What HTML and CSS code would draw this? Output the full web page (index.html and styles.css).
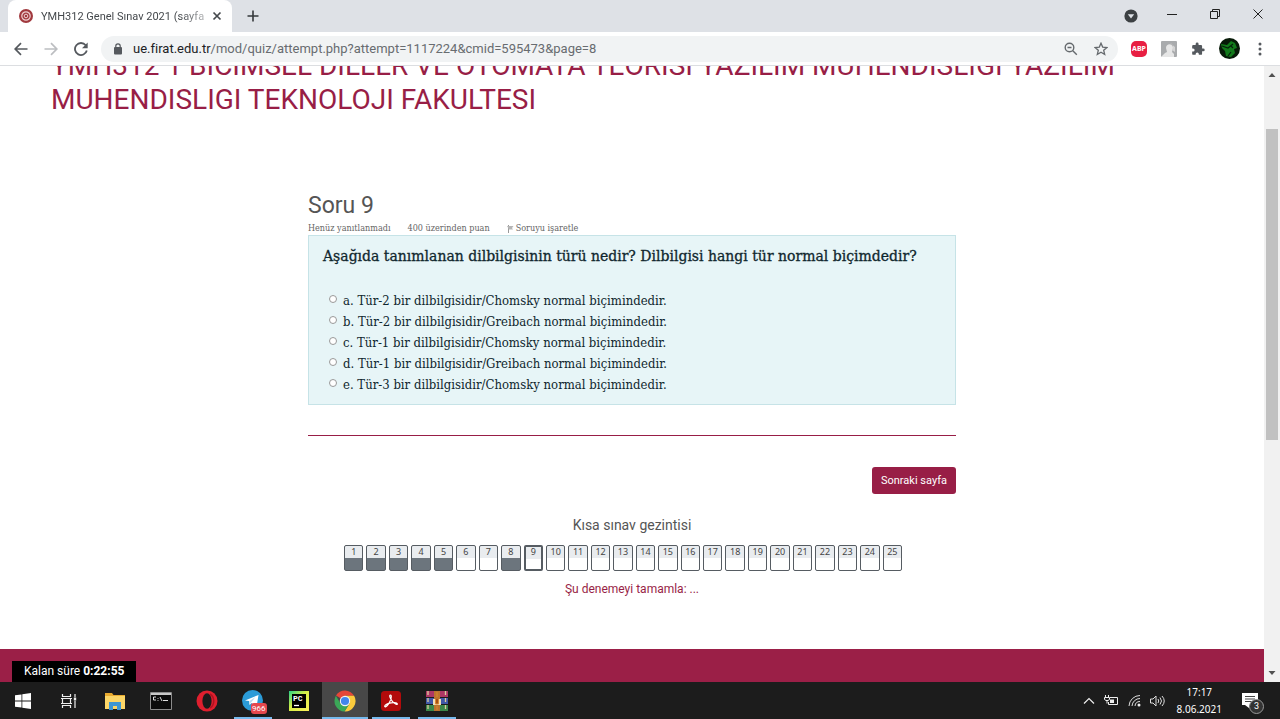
FILE: index.html
```html
<!DOCTYPE html>
<html lang="tr">
<head>
<meta charset="utf-8">
<title>YMH312 Genel Sınav 2021</title>
<link rel="stylesheet" href="styles.css">
</head>
<body>
<header class="browser">
  <div class="tabs">
    <div class="tab">
      <svg class="favicon" width="14" height="14" viewBox="0 0 14 14"><circle cx="7" cy="7" r="7" fill="#a1393e"/><circle cx="7" cy="7" r="4.2" fill="none" stroke="#efd0d0" stroke-width="1.2"/><circle cx="7" cy="7" r="1.800" fill="none" stroke="#efd0d0"/></svg>
      <span class="tab-title">YMH312 Genel Sınav 2021 (sayfa</span>
      <button class="icon" aria-label="Sekmeyi kapat"><svg width="10" height="10" viewBox="0 0 10 10"><path d="M1.500 1.500l7 7m0-7l-7 7" stroke="#45494d" stroke-width="1.700"/></svg></button>
    </div>
    <button class="icon new-tab" aria-label="Yeni sekme"><svg width="12" height="12" viewBox="0 0 12 12"><path d="M6 .5v11M.5 6h11" stroke="#35383b" stroke-width="1.600"/></svg></button>
    <div class="window-buttons">
      <button class="icon search-tabs" aria-label="Sekme ara"><svg width="14" height="14" viewBox="0 0 14 14"><circle cx="7" cy="7" r="6.600" fill="#3c4043"/><path d="M3.800 5.200h6.400L7 9.600z" fill="#dee1e6"/></svg></button>
      <button class="icon" aria-label="Küçült"><svg width="10" height="10" viewBox="0 0 10 10"><path d="M0 5.500h10" stroke="#222"/></svg></button>
      <button class="icon" aria-label="Geri yükle"><svg width="10" height="10" viewBox="0 0 10 10" fill="none" stroke="#222"><path d="M.5 2.500h7v7h-7zM2.500 2.500v-2h7v7h-2"/></svg></button>
      <button class="icon" aria-label="Kapat"><svg width="10" height="10" viewBox="0 0 10 10"><path d="M.5.5l9 9m0-9l-9 9" stroke="#222"/></svg></button>
    </div>
  </div>
  <div class="toolbar">
    <div class="nav-buttons">
      <button class="icon" aria-label="Geri"><svg width="14" height="14" viewBox="0 0 14 14" fill="none" stroke="#55595e" stroke-width="1.700"><path d="M13.500 7H1.500M7 1.200L1.200 7 7 12.800"/></svg></button>
      <button class="icon" aria-label="İleri"><svg width="14" height="14" viewBox="0 0 14 14" fill="none" stroke="#bcbec1" stroke-width="1.700"><path d="M.5 7h12M7 1.200L12.800 7 7 12.800"/></svg></button>
      <button class="icon" aria-label="Yenile"><svg width="14" height="14" viewBox="0 0 14 14"><path d="M11.700 3.300A6 6 0 1 0 12.800 8.500" fill="none" stroke="#55595e" stroke-width="1.800"/><path d="M13.700.5v5.700H8z" fill="#55595e"/></svg></button>
    </div>
    <div class="omnibox">
      <svg width="10" height="12" viewBox="0 0 10 12"><rect x="1" y="4" width="8" height="7.500" rx="1" fill="#55595e"/><path d="M2.800 4.500V3a2.200 2.200 0 0 1 4.400 0v1.500" fill="none" stroke="#55595e" stroke-width="1.200"/></svg>
      <span class="url"><b class="host">ue.firat.edu.tr</b>/mod/quiz/attempt.php?attempt=1117224&amp;cmid=595473&amp;page=8</span>
      <button class="icon" aria-label="Yakınlaştırma"><svg width="14" height="14" viewBox="0 0 14 14" fill="none" stroke="#65696d" stroke-width="1.400"><circle cx="5.500" cy="5.500" r="4.300"/><path d="M8.800 8.800l4 4M3.500 5.500h4"/></svg></button>
      <button class="icon" aria-label="Yer işareti"><svg width="14" height="14" viewBox="0 0 14 14" fill="none" stroke="#65696d" stroke-width="1.300"><path d="M7 1.200l1.700 3.900 4.200.4-3.200 2.800 1 4.200L7 10.300l-3.700 2.200 1-4.200L1.100 5.500l4.200-.4z"/></svg></button>
    </div>
    <div class="extensions">
      <button class="icon abp">ABP</button>
      <button class="icon" aria-label="Eklenti"><svg width="16" height="16" viewBox="0 0 16 16"><rect width="16" height="16" rx="1" fill="#a9abad"/><path d="M0 16l4-4 2-1-1-4c0-5 7-5 7 0l-1 4 2 2v3z" fill="#e6e6e6"/><path d="M9 2c3 1 4 4 2 7l3 2V6z" fill="#d4d4d4"/></svg></button>
      <button class="icon" aria-label="Uzantılar"><svg width="14" height="14" viewBox="0 0 24 24"><path d="M21 11h-2V7a2 2 0 0 0-2-2h-4V3.500a2.500 2.500 0 0 0-5 0V5H4a2 2 0 0 0-2 2v4h1.500a2.700 2.700 0 0 1 0 5.400H2V20a2 2 0 0 0 2 2h4v-1.500a2.700 2.700 0 0 1 5.400 0V22H17a2 2 0 0 0 2-2v-4h2a2.500 2.500 0 0 0 0-5z" fill="#55595e"/></svg></button>
      <button class="icon" aria-label="Profil"><svg width="21" height="21" viewBox="0 0 21 21"><circle cx="10.500" cy="10.500" r="10.500" fill="#071a08"/><path d="M2 6l6 1 4-4 4 2 2 5-3 1 1 4-4 4-5-1-1-5-3-3z" fill="#127a1b"/><path d="M3 8l6 2 5-4M9 18l3-4M12 8l2 2" fill="none" stroke="#06220a" stroke-width="1.200"/></svg></button>
      <button class="icon menu" aria-label="Menü"><svg width="4" height="14" viewBox="0 0 4 14" fill="#55595e"><circle cx="2" cy="2" r="1.500"/><circle cx="2" cy="7" r="1.500"/><circle cx="2" cy="12" r="1.500"/></svg></button>
    </div>
  </div>
</header>

<div class="viewport">
  <main class="page">
    <h1 class="course">YMH312 1 BICIMSEL DILLER VE OTOMATA TEORISI YAZILIM MUHENDISLIGI YAZILIM MUHENDISLIGI TEKNOLOJI FAKULTESI</h1>
    <div class="quiz">
      <h2 class="number">Soru 9</h2>
      <div class="meta">
        <span>Henüz yanıtlanmadı</span>
        <span>400 üzerinden puan</span>
        <a class="flag" href="#"><svg width="7" height="8" viewBox="0 0 7 8"><path d="M1.500 0v8" stroke="#999"/><path d="M0 1h6.500L5 3l1 1.500H2z" fill="#b5b5b5"/></svg>Soruyu işaretle</a>
      </div>
      <form class="question">
        <p class="prompt">Aşağıda tanımlanan dilbilgisinin türü nedir? Dilbilgisi hangi tür normal biçimdedir?</p>
        <div class="answers">
          <label><input type="radio" name="answer"><span>a. Tür-2 bir dilbilgisidir/Chomsky normal biçimindedir.</span></label>
          <label><input type="radio" name="answer"><span>b. Tür-2 bir dilbilgisidir/Greibach normal biçimindedir.</span></label>
          <label><input type="radio" name="answer"><span>c. Tür-1 bir dilbilgisidir/Chomsky normal biçimindedir.</span></label>
          <label><input type="radio" name="answer"><span>d. Tür-1 bir dilbilgisidir/Greibach normal biçimindedir.</span></label>
          <label><input type="radio" name="answer"><span>e. Tür-3 bir dilbilgisidir/Chomsky normal biçimindedir.</span></label>
        </div>
      </form>
      <hr class="rule">
      <div class="actions"><button class="next">Sonraki sayfa</button></div>
      <section class="navigation">
        <h3 class="nav-title">Kısa sınav gezintisi</h3>
        <div class="nav-grid">
          <a class="q done" href="#">1</a><a class="q done" href="#">2</a><a class="q done" href="#">3</a><a class="q done" href="#">4</a><a class="q done" href="#">5</a><a class="q" href="#">6</a><a class="q" href="#">7</a><a class="q done" href="#">8</a><a class="q current" href="#">9</a><a class="q" href="#">10</a><a class="q" href="#">11</a><a class="q" href="#">12</a><a class="q" href="#">13</a><a class="q" href="#">14</a><a class="q" href="#">15</a><a class="q" href="#">16</a><a class="q" href="#">17</a><a class="q" href="#">18</a><a class="q" href="#">19</a><a class="q" href="#">20</a><a class="q" href="#">21</a><a class="q" href="#">22</a><a class="q" href="#">23</a><a class="q" href="#">24</a><a class="q" href="#">25</a>
        </div>
        <a class="finish" href="#">Şu denemeyi tamamla: ...</a>
      </section>
    </div>
    <footer class="footer"></footer>
    <div class="timer">Kalan süre <b>0:22:55</b></div>
  </main>
  <div class="scrollbar">
    <svg width="16" height="17" viewBox="0 0 16 17"><path d="M4.500 11h7L8 7z" fill="#505050"/></svg>
    <div class="track"><div class="thumb"></div></div>
    <svg width="16" height="17" viewBox="0 0 16 17"><path d="M4.500 6h7L8 10z" fill="#505050"/></svg>
  </div>
</div>

<nav class="taskbar">
  <div class="apps">
    <button class="app" aria-label="Başlat"><svg width="16" height="16" viewBox="0 0 16 16" fill="#fff"><path d="M0 2.300l6.500-.9v6.100H0zM7.300 1.300L16 0v7.500H7.300zM0 8.400h6.500v6.100L0 13.700zM7.300 8.400H16V16l-8.700-1.300z"/></svg></button>
    <button class="app" aria-label="Görev görünümü"><svg width="16" height="14" viewBox="0 0 16 14" fill="none" stroke="#eee" stroke-width="1.200"><path d="M1.500 0v2.500h8V0M1.500 14v-2.500h8V14M0 4.500h11M0 9.500h11M1.500 4.500v5M9.500 4.500v5M14 0v3M14 7v7"/><path d="M12.800 3.500h2.400v3h-2.400z" fill="#eee" stroke="none"/></svg></button>
    <button class="app" aria-label="Dosya Gezgini"><svg width="20" height="18" viewBox="0 0 20 18"><path d="M0 1h7l1.500 2H20v14H0z" fill="#e9aa2f"/><path d="M0 4h20v13H0z" fill="#fcd667"/><path d="M4 10h12v8h-4v-4H8v4H4z" fill="#3d96d3"/></svg></button>
    <button class="app" aria-label="Komut İstemi"><svg width="22" height="18" viewBox="0 0 22 18"><path d="M.5.5h21v17H.5z" fill="#0b0b0b" stroke="#8b8b8b"/><path d="M1 1h20v2H1z" fill="#c8c8c8"/><path d="M6 5H3.500v3H6M8 6v.8M8 8v.8M10 5l2 4M13 8.500h5" fill="none" stroke="#ddd"/></svg></button>
    <button class="app" aria-label="Opera"><svg width="22" height="22" viewBox="0 0 22 22"><circle cx="11" cy="11" r="10.500" fill="#df1f2e"/><ellipse cx="11" cy="11" rx="4.600" ry="7.800" fill="#1b1b1b"/><path d="M14 4c5 3 5 11 0 14" fill="none" stroke="#af1220" stroke-width="1.500"/></svg></button>
    <button class="app open" aria-label="Telegram"><svg width="22" height="22" viewBox="0 0 22 22"><circle cx="10.500" cy="10.500" r="10.500" fill="#2b9bd7"/><path d="M3 10.500L16.500 5l-2 12-5-4-2 2-.5-4z" fill="#fff"/><path d="M7.500 11l6-4-4 5-2 2z" fill="#b8dcf0"/></svg><span class="badge">966</span></button>
    <button class="app" aria-label="PyCharm"><svg width="20" height="20" viewBox="0 0 20 20"><defs><linearGradient id="pc" x2="1" y2="1"><stop stop-color="#27cf88"/><stop offset=".45" stop-color="#d7ee45"/><stop offset="1" stop-color="#fbf05a"/></linearGradient></defs><path d="M0 0h20v20H0z" fill="url(#pc)"/><path d="M3 3h14v14H3z" fill="#000"/><text class="pc" x="4" y="10">PC</text><path d="M5 14.500h5" stroke="#fff" stroke-width="1.300"/></svg></button>
    <button class="app open active" aria-label="Chrome"><svg width="22" height="22" viewBox="0 0 22 22"><path d="M11 11L2 5.500A10.500 10.500 0 0 1 20.100 5.800H11z" fill="#e64638"/><path d="M11 5.800h9.100A10.500 10.500 0 0 1 10.500 21.500L15.500 13.500z" fill="#fbcb3c"/><path d="M1.900 5.700A10.500 10.500 0 0 0 10.500 21.500l5-8L11 11 6.500 13.500z" fill="#3ba757"/><circle cx="11" cy="11" r="5.200" fill="#f4f4f4"/><circle cx="11" cy="11" r="4.100" fill="#4285ec"/></svg></button>
    <button class="app open" aria-label="Acrobat"><svg width="20" height="20" viewBox="0 0 20 20"><rect width="20" height="20" rx="3.500" fill="#b30b0b"/><path d="M9.500 4c-1.500 0-.7 3 1.500 5.800 2 2.500 5 4.500 5.300 3.200.3-1.500-5-1.800-8.600-.6-2.600.9-4.500 2.500-3.900 3.200.9 1 3.900-2 5.500-6 1.200-3 1.300-5.600.2-5.600z" fill="none" stroke="#fff" stroke-width="1.200"/></svg></button>
    <button class="app open" aria-label="WinRAR"><svg width="22" height="20" viewBox="0 0 22 20"><path d="M0 0h22v6H0z" fill="#ad3765"/><path d="M0 7h22v6H0z" fill="#4058a8"/><path d="M0 14h22v6H0z" fill="#3b874a"/><path d="M2 0v20M19.500 0v20" stroke="#dacb9c" stroke-width="1.300" stroke-dasharray="4 3"/><path d="M8 0h6v20H8z" fill="#bc732e"/><path d="M7 8h8v6H7z" fill="#f2dfba"/><path d="M9.500 8v5h3V8M11 1v5M11 15v4" fill="#a55017" stroke="#d98a2e"/></svg></button>
  </div>
  <div class="tray">
    <button class="icon" aria-label="Gizli simgeler"><svg width="12" height="8" viewBox="0 0 12 8"><path d="M1 6.500l5-5 5 5" fill="none" stroke="#eee" stroke-width="1.200"/></svg></button>
    <svg width="15" height="12" viewBox="0 0 15 12" fill="none" stroke="#eee"><path d="M6 2.500h7.500v7h-9V7M1.500 0v2M4.500 0v2M.5 2.500h5v2l-1.500 1H2l-1.500-1zM3 6v2.500"/><path d="M6 4.500h4v3.500H6z" fill="#eee" stroke="none"/></svg>
    <svg width="13" height="13" viewBox="0 0 13 13" fill="none" stroke="#ddd"><path d="M1 12A11 11 0 0 1 12 1.500M4 12a8 8 0 0 1 8-7.500M7 12a5 5 0 0 1 5-4.500"/><circle cx="11" cy="11" r="1.500" fill="#eee" stroke="none"/></svg>
    <svg width="15" height="12" viewBox="0 0 15 12" fill="none" stroke="#ddd"><path d="M.5 4v4H3l3 3V1L3 4zM8 4q1.500 2 0 4M10 2.500q3 3.500 0 7M12 1q4.500 5 0 10"/></svg>
    <div class="clock"><time>17:17</time><time>8.06.2021</time></div>
    <button class="icon notice" aria-label="Bildirimler"><svg width="16" height="16" viewBox="0 0 16 16"><path d="M0 0h16v12h-9v3l-4-3H0z" fill="#fff"/><path d="M3 3.500h10M3 6h10M3 8.500h7" stroke="#444"/></svg><span class="count">3</span></button>
  </div>
</nav>
</body>
</html>
```
FILE: styles.css
```css
* { box-sizing: border-box; }
body { margin: 0; height: 100vh; display: flex; flex-direction: column; overflow: hidden; background: #fff; font-family: Roboto, "Liberation Sans", sans-serif; }
button { font: inherit; color: inherit; border: 0; background: none; padding: 0; }
a { text-decoration: none; color: inherit; }
svg { display: block; flex: none; }
h1, h2, h3, p { margin: 0; font-weight: 400; }
.icon { display: flex; align-items: center; justify-content: center; flex: none; }

.browser { flex: none; border-bottom: 1px solid #dcdee1; font-family: "Noto Sans", sans-serif; }
.tabs { display: flex; align-items: center; height: 32px; background: #dee1e6; padding-left: 8px; }
.tab { display: flex; align-items: center; gap: 8px; width: 224px; height: 32px; padding: 0 10px 0 11px; background: #fff; border-radius: 8px 8px 0 0; }
.tab-title { flex: 1; min-width: 0; white-space: nowrap; font: 11px Roboto, sans-serif; color: #45494d; -webkit-mask-image: linear-gradient(90deg, #000 85%, #0006); mask-image: linear-gradient(90deg, #000 85%, #0006); }
.new-tab { margin-left: 15px; }
.window-buttons { display: flex; align-items: center; gap: 33px; margin-left: auto; padding: 0 17px 4px 0; }
.search-tabs { margin: 3px -4px 0 0; }
.toolbar { display: flex; align-items: center; height: 33px; background: #fff; }
.nav-buttons { display: flex; gap: 16px; padding: 0 13px 0 14px; }
.omnibox { flex: 1; display: flex; align-items: center; gap: 16px; height: 26px; border-radius: 13px; background: #f1f3f4; padding: 0 10px 0 12px; font: 13px/18px Roboto, sans-serif; color: #686c70; }
.url { flex: 1; white-space: nowrap; margin-left: -6px; }
.host { font-weight: 400; color: #202124; }
.extensions { display: flex; align-items: center; gap: 14px; padding: 0 18px 0 13px; }
.menu { margin-left: 4px; }
.abp { width: 16px; height: 16px; border-radius: 5px; background: #e81f43; color: #fff; font-size: 7px; font-weight: 700; }

.viewport { flex: 1; min-height: 0; display: flex; }
.page { position: relative; flex: 1; min-width: 0; display: flex; flex-direction: column; overflow: hidden; }
.course { margin: -17px 51px 0; font-size: 28px; line-height: 34px; color: #981e46; }
.quiz { width: 100%; max-width: 648px; margin: 73px auto 0; }
.number { font-size: 23px; line-height: 32px; color: #555; }
.meta { display: flex; gap: 17px; font: 9px/13px "DejaVu Serif Condensed", "DejaVu Serif", serif; color: #666; }
.flag { display: flex; align-items: center; gap: 2px; }
.question { background: #e7f5f7; border: 1px solid #c6e3e7; padding: 8px 14px 9px; color: #10272e; font-family: "DejaVu Serif Condensed", "DejaVu Serif", serif; }
.prompt { font-family: "DejaVu Serif", serif; font-size: 14px; line-height: 24px; -webkit-text-stroke: 0.3px #10272e; }
.answers { padding: 22px 0 0 6px; font-size: 13px; line-height: 21px; }
.answers label { display: flex; gap: 6px; }
.answers input { appearance: none; width: 8px; height: 8px; margin: 5px 0 0; border: 1px solid #999; border-radius: 50%; background: #fff; }
.rule { height: 1px; margin: 30px 0 31px; border: 0; background: #981e46; }
.actions { display: flex; justify-content: flex-end; }
.next { height: 27px; padding: 0 9px; border-radius: 3px; background: #981e46; color: #fff; font: 11px Roboto, sans-serif; }
.navigation { display: flex; flex-direction: column; align-items: center; padding-top: 21px; color: #555; }
.nav-title { font-size: 14px; line-height: 20px; }
.nav-grid { display: grid; grid-template-columns: repeat(25, 1fr); gap: 3px; width: 100%; max-width: 558px; margin: 10px 18px 0 0; }
.q { height: 26px; border: 1px solid #565c62; border-radius: 2px; background: linear-gradient(#e9ecef 12px, #fff 12px); font: 9px/12px "Noto Sans", sans-serif; color: #444; text-align: center; }
.done { background: linear-gradient(#e9ecef 12px, #6c757d 12px); }
.current { border-width: 2px; line-height: 10px; }
.finish { margin-top: 10px; font-size: 12px; line-height: 16px; color: #981e46; }
.footer { flex: 1; margin-top: 52px; background: #9b1f47; }
.timer { position: absolute; left: 12px; bottom: 0; padding: 0 12px; background: #000; color: #fff; font-size: 12px; line-height: 21px; }
.scrollbar { display: flex; flex-direction: column; width: 16px; background: #f1f1f1; }
.track { flex: 1; padding: 46px 2px 0; }
.thumb { height: 58%; background: #c1c1c1; }

.taskbar { flex: none; display: flex; justify-content: space-between; height: 37px; background: #1c1c1c; color: #fff; }
.apps, .tray { display: flex; align-items: center; }
.app { position: relative; display: flex; align-items: center; justify-content: center; width: 46px; height: 37px; }
.open::after { content: ""; position: absolute; bottom: 0; left: 4px; right: 4px; height: 2px; background: #76b9ed; }
.active { background: #484848; }
.active::after { left: 0; right: 0; }
.badge { position: absolute; left: 21px; top: 21px; padding: 0 1px; border-radius: 3px; background: #e5484d; font-size: 8px; line-height: 11px; }
.pc { font: 700 8px "Liberation Mono", monospace; fill: #fff; }
.tray { gap: 9px; padding-right: 22px; }
.clock { display: flex; flex-direction: column; align-items: center; margin-left: 3px; font: 10px/17px "Noto Sans", sans-serif; }
.notice { position: relative; margin-left: 11px; }
.count { position: absolute; left: 7px; top: 6px; width: 15px; height: 15px; border: 1px solid #999; border-radius: 50%; background: #333; font-size: 9px; line-height: 13px; text-align: center; }
```
